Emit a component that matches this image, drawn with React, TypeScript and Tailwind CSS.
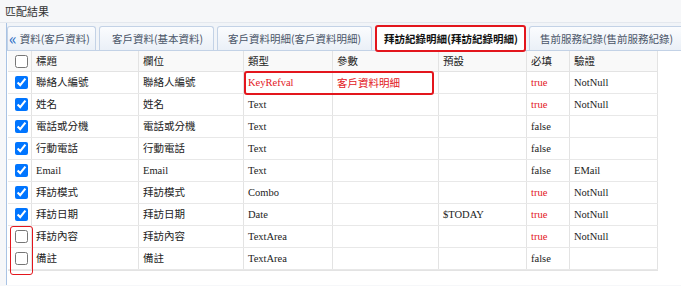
import React from "react";

type Row = {
  checked: boolean;
  title: string;
  field: string;
  type: string;
  param?: string;
  def?: string;
  required: boolean;
  valid?: string;
};

const rows: Row[] = [
  { checked: true, title: "聯絡人編號", field: "聯絡人編號", type: "KeyRefval", param: "客戶資料明細", required: true, valid: "NotNull" },
  { checked: true, title: "姓名", field: "姓名", type: "Text", required: true, valid: "NotNull" },
  { checked: true, title: "電話或分機", field: "電話或分機", type: "Text", required: false },
  { checked: true, title: "行動電話", field: "行動電話", type: "Text", required: false },
  { checked: true, title: "Email", field: "Email", type: "Text", required: false, valid: "EMail" },
  { checked: true, title: "拜訪模式", field: "拜訪模式", type: "Combo", required: true, valid: "NotNull" },
  { checked: true, title: "拜訪日期", field: "拜訪日期", type: "Date", def: "$TODAY", required: true, valid: "NotNull" },
  { checked: false, title: "拜訪內容", field: "拜訪內容", type: "TextArea", required: true, valid: "NotNull" },
  { checked: false, title: "備註", field: "備註", type: "TextArea", required: false },
];

const cols = "grid grid-cols-[24px_107px_105px_89px_106px_88px_43px_88px]";
const cell = "border-r border-[#e3e3e3] pl-[4px] flex items-center whitespace-nowrap overflow-hidden";

const Tab = ({ label, active, className }: { label: React.ReactNode; active?: boolean; className: string }) => (
  <div
    className={
      "h-[24px] flex items-center rounded-t-[3px] border border-b-0 whitespace-nowrap overflow-hidden shrink-0 " +
      (active
        ? "border-[2px] border-b-[2px] border-[#e3161d] rounded-[3px] bg-white font-bold text-[#111] h-[27px] "
        : "border-[#c3d2e6] bg-gradient-to-b from-[#fbfcfe] to-[#eaf0f7] text-[#4a5568] ") +
      className
    }
    style={{ fontFamily: '"Noto Sans CJK TC", "Liberation Sans", sans-serif' }}
  >
    {label}
  </div>
);

export default function App() {
  return (
    <div
      className="w-[681px] h-[286px] overflow-hidden bg-[#f6f7f9] text-[10.5px] text-[#222]"
      style={{ fontFamily: '"Liberation Serif", "Noto Sans CJK TC", serif' }}
    >
      <div className="h-[23px] pl-[5px] flex items-center text-[11px] text-[#333] border-b border-[#e4e8ee]" style={{ fontFamily: '"Noto Sans CJK TC", sans-serif' }}>
        匹配結果
      </div>
      <div className="ml-[6px] border-l border-[#a9c3e4] h-[262px] relative bg-white">
        {/* tabs */}
        <div className="h-[28px] flex items-end gap-[3px] border-b border-[#c3d2e6] bg-[#f1f4f8]">
          <Tab
            className="w-[89px] pl-[1px]"
            label={
              <>
                <span className="text-[#2b6cc4] text-[16px] leading-none mr-[3px] -mt-[2px]">«</span>
                <span>資料(客戶資料)</span>
              </>
            }
          />
          <Tab className="w-[115px] pl-[12px]" label="客戶資料(基本資料)" />
          <Tab className="w-[155px] pl-[10px]" label="客戶資料明細(客戶資料明細)" />
          <Tab active className="w-[151px] pl-[7px] mb-[-2px] relative z-10" label="拜訪紀錄明細(拜訪紀錄明細)" />
          <Tab className="w-[160px] pl-[10px]" label="售前服務紀錄(售前服務紀錄)" />
        </div>

        {/* table */}
        <div className="relative w-[650px] bg-white ml-[1px] border-b border-[#e3e3e3]">
          <div className={cols + " h-[21px] bg-[#f9f9f9] border-b border-[#e3e3e3]"} style={{ fontFamily: '"Noto Sans CJK TC", sans-serif' }}>
            <div className={cell + " justify-center pl-0"}>
              <input type="checkbox" className="w-[13px] h-[13px] m-0" />
            </div>
            <div className={cell}>標題</div>
            <div className={cell}>欄位</div>
            <div className={cell}>類型</div>
            <div className={cell}>參數</div>
            <div className={cell}>預設</div>
            <div className={cell}>必填</div>
            <div className={cell}>驗證</div>
          </div>
          {rows.map((r, i) => (
            <div key={i} className={cols + " h-[22px] border-b border-[#e8e8e8] last:border-b-0"}>
              <div className={cell + " justify-center pl-0"}>
                <input type="checkbox" defaultChecked={r.checked} className="w-[13px] h-[13px] m-0" />
              </div>
              <div className={cell}>{r.title}</div>
              <div className={cell}>{r.field}</div>
              <div className={cell + (r.param ? " text-[#e3161d]" : "")}>{r.type}</div>
              <div className={cell + " text-[#e3161d]"} style={{ fontFamily: '"Noto Sans CJK TC", sans-serif' }}>{r.param}</div>
              <div className={cell}>{r.def}</div>
              <div className={cell + (r.required ? " text-[#e3161d]" : "")}>{r.required ? "true" : "false"}</div>
              <div className={cell}>{r.valid}</div>
            </div>
          ))}

          {/* annotation boxes */}
          <div className="absolute left-[236px] top-[20px] w-[190px] h-[24px] border-[2px] border-[#e3161d] rounded-[3px] pointer-events-none" />
          <div className="absolute left-[2px] top-[175px] w-[23px] h-[49px] border-[1.5px] border-[#e3161d] rounded-[3px] pointer-events-none" />
        </div>
      </div>
    </div>
  );
}
